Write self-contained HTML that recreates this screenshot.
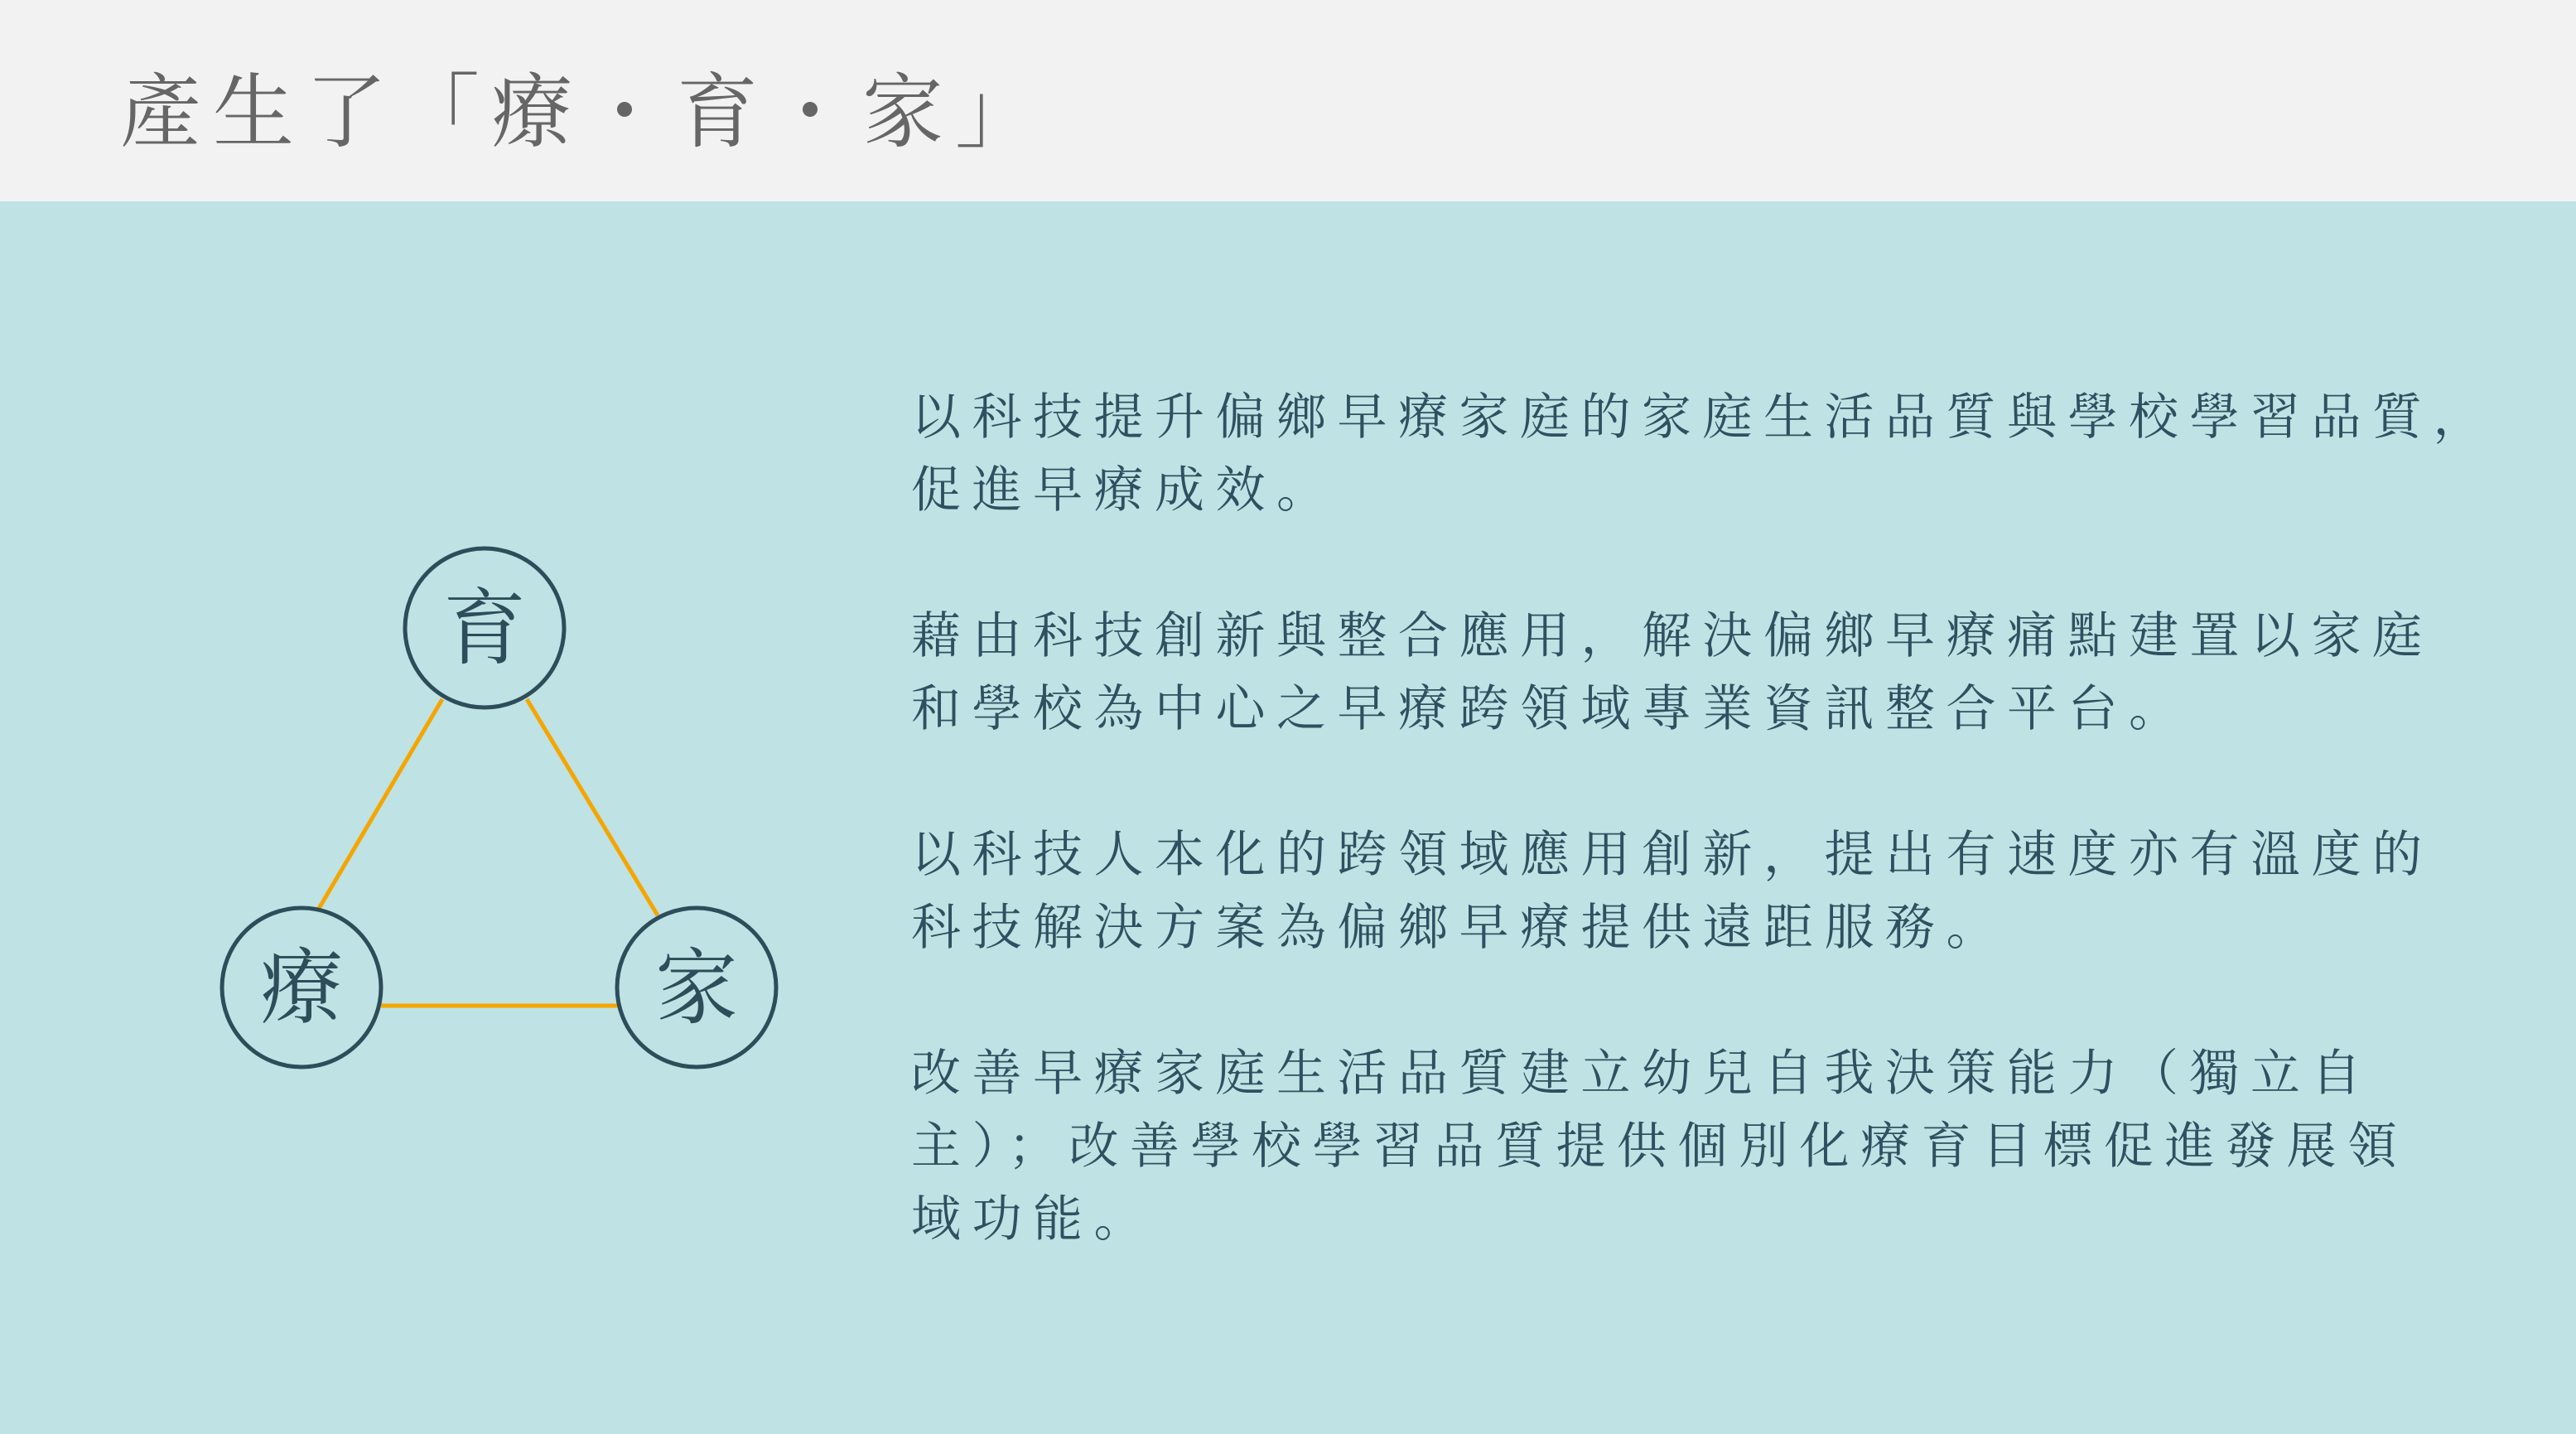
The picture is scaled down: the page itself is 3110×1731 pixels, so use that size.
<!DOCTYPE html>
<html><head><meta charset="utf-8"><style>
html,body{margin:0;padding:0}
body{width:3110px;height:1731px;background:#bfe2e4;position:relative;overflow:hidden;font-family:"Noto Serif CJK SC",serif}
.hdr{position:absolute;left:0;top:0;width:3110px;height:243px;background:#f2f2f2}
.title{position:absolute;left:145px;top:63px;font-size:98px;line-height:130px;color:#666;letter-spacing:14px;white-space:nowrap}
.txt{position:absolute;left:1100px;top:455px;font-size:60px;line-height:88px;color:#2e5060;letter-spacing:13.5px;white-space:nowrap}
</style></head><body>
<div class="hdr"></div>
<div class="title">產生了「療・育・家」</div>
<svg style="position:absolute;left:0;top:0" width="3110" height="1731">
<line x1="534" y1="844" x2="383" y2="1100" stroke="#f5a500" stroke-width="5"/>
<line x1="636" y1="844" x2="794" y2="1105" stroke="#f5a500" stroke-width="5"/>
<line x1="460" y1="1214" x2="746" y2="1214" stroke="#f5a500" stroke-width="5"/>
<g fill="none" stroke="#2e4d5a" stroke-width="5">
<circle cx="585" cy="758" r="96"/>
<circle cx="364" cy="1192" r="96"/>
<circle cx="841" cy="1192" r="96"/>
</g>
<g fill="#2e4d5a" font-size="100" text-anchor="middle" font-family="Noto Serif CJK SC, serif">
<text x="585" y="793">育</text>
<text x="364" y="1227">療</text>
<text x="841" y="1227">家</text>
</g>
</svg>
<div class="txt">以科技提升偏鄉早療家庭的家庭生活品質與學校學習品質，<br>促進早療成效。<br><br>藉由科技創新與整合應用，解決偏鄉早療痛點建置以家庭<br>和學校為中心之早療跨領域專業資訊整合平台。<br><br>以科技人本化的跨領域應用創新，提出有速度亦有溫度的<br>科技解決方案為偏鄉早療提供遠距服務。<br><br>改善早療家庭生活品質建立幼兒自我決策能力（獨立自<br>主）；改善學校學習品質提供個別化療育目標促進發展領<br>域功能。</div>
</body></html>
